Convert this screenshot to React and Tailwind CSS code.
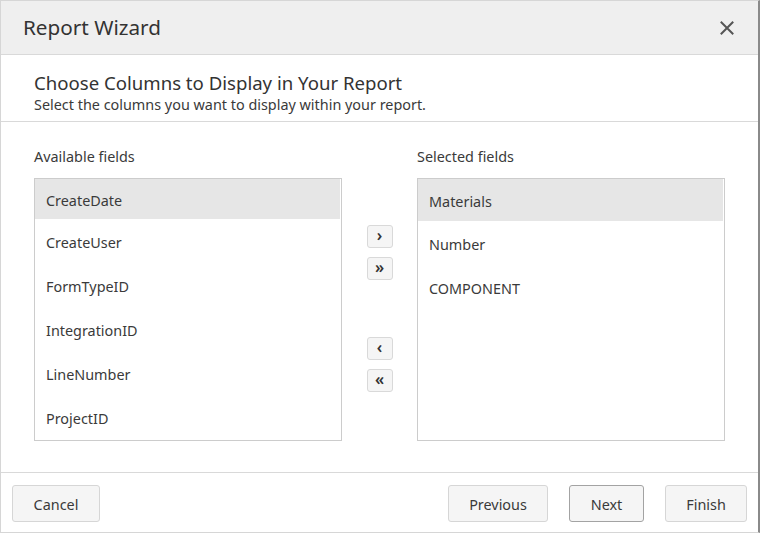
import React from "react";

const font = { fontFamily: '"Noto Sans", "Open Sans", sans-serif' };

function Item({ children, active, h }) {
  return (
    <div
      className={`flex items-center pl-[11px] pt-[3px] text-[14.4px] text-[#3a3a3a] ${active ? "bg-[#e6e6e6]" : ""} ${h}`}
    >
      {children}
    </div>
  );
}

function SmallBtn({ children }) {
  return (
    <button className="w-[26px] h-[23px] flex items-center justify-center rounded-[3px] border border-[#d9d9d9] bg-[#f5f5f5] text-[16px] font-semibold leading-none text-[#333] pb-[3px]">
      {children}
    </button>
  );
}

function FBtn({ children, w, dark }) {
  return (
    <button
      className={`h-[37px] ${w} rounded-[3px] border ${dark ? "border-[#a3a3a3]" : "border-[#d6d6d6]"} bg-[#f5f5f5] text-[14.4px] text-[#3a3a3a] flex items-center justify-center pt-[3px]`}
    >
      {children}
    </button>
  );
}

export default function App() {
  const left = ["CreateDate", "CreateUser", "FormTypeID", "IntegrationID", "LineNumber", "ProjectID"];
  const right = ["Materials", "Number", "COMPONENT"];
  return (
    <div style={font} className="w-[760px] h-[533px] flex flex-col bg-white border-t border-l border-b border-[#d6d6d6] border-r-2 border-r-[#8a8a8a] overflow-hidden">
      <div className="h-[54px] shrink-0 bg-[#efefef] border-b border-[#d9d9d9] flex items-center justify-between pl-[22px] pr-[24px]">
        <div className="text-[20.7px] text-[#333]">Report Wizard</div>
        <svg width="14" height="14" viewBox="0 0 14 14" className="mt-[1px]">
          <path d="M1.5 1.5 L12.5 12.5 M12.5 1.5 L1.5 12.5" stroke="#555" strokeWidth="2" strokeLinecap="square" />
        </svg>
      </div>
      <div className="h-[67px] shrink-0 border-b border-[#d9d9d9] pl-[33px] pt-[15px]">
        <div className="text-[18.6px] leading-[25px] text-[#333]">Choose Columns to Display in Your Report</div>
        <div className="text-[14.4px] leading-[18px] mt-[1px] text-[#3a3a3a]">Select the columns you want to display within your report.</div>
      </div>
      <div className="h-[351px] shrink-0 border-b border-[#d9d9d9] flex pl-[33px] pt-[25px]">
        <div className="w-[308px] flex flex-col">
          <div className="text-[14.4px] leading-[20px] text-[#3a3a3a] h-[31px]">Available fields</div>
          <div className="h-[263px] border border-[#cccccc] pr-[1px] overflow-hidden">
            {left.map((t, i) => (
              <Item key={t} active={i === 0} h={i === 0 ? "h-[40px]" : "h-[44px]"}>
                {t}
              </Item>
            ))}
          </div>
        </div>
        <div className="w-[75px] flex flex-col items-center pt-[78px]">
          <div className="flex flex-col gap-[9px]">
            <SmallBtn>›</SmallBtn>
            <SmallBtn>»</SmallBtn>
          </div>
          <div className="flex flex-col gap-[9px] mt-[57px]">
            <SmallBtn>‹</SmallBtn>
            <SmallBtn>«</SmallBtn>
          </div>
        </div>
        <div className="w-[308px] flex flex-col">
          <div className="text-[14.4px] leading-[20px] text-[#3a3a3a] h-[31px]">Selected fields</div>
          <div className="h-[263px] border border-[#cccccc] pr-[1px] overflow-hidden">
            {right.map((t, i) => (
              <Item key={t} active={i === 0} h={i === 0 ? "h-[42px]" : "h-[44px]"}>
                {t}
              </Item>
            ))}
          </div>
        </div>
      </div>
      <div className="flex-1 flex items-center justify-between pl-[11px] pr-[11px] pt-[1px]">
        <FBtn w="w-[88px]">Cancel</FBtn>
        <div className="flex gap-[21px]">
          <FBtn w="w-[100px]">Previous</FBtn>
          <FBtn w="w-[75px]" dark>Next</FBtn>
          <FBtn w="w-[82px]">Finish</FBtn>
        </div>
      </div>
    </div>
  );
}
